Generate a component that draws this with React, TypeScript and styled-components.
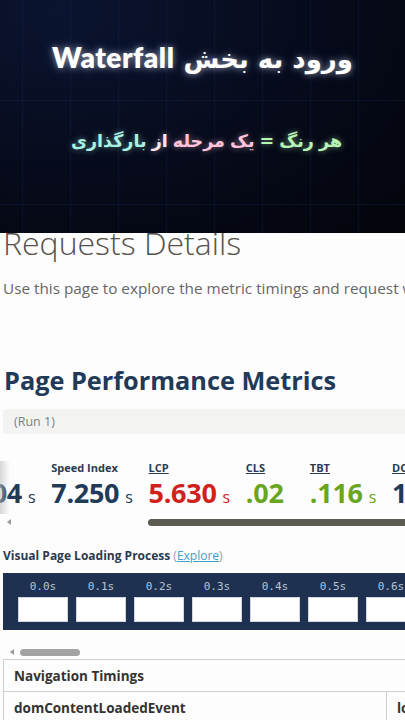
import styled, { createGlobalStyle } from 'styled-components'

const Global = createGlobalStyle`
    html, body {
        margin: 0;
        padding: 0;
        background: #fdfdfd;
    }
    body {
        font-family: "Open Sans", "Liberation Sans", sans-serif;
    }
`

const Page = styled.div`
    width: 405px;
    height: 720px;
    overflow: hidden;
    background: #fdfdfd;
`

const Banner = styled.div`
    height: 233px;
    display: flex;
    flex-direction: column;
    align-items: center;
    background-color: #050914;
    background-image:
        linear-gradient(rgba(70, 100, 220, 0.1) 1px, transparent 1px),
        linear-gradient(90deg, rgba(70, 100, 220, 0.09) 1px, transparent 1px),
        radial-gradient(ellipse at 15% 5%, #0b1430 0%, #060a1a 55%, #03050b 100%);
    background-size: 100% 104px, 48px 100%, 100% 100%;
    background-position: 0 -4px, 22px 0, 0 0;
`

const BannerTitle = styled.h1`
    margin: 40px 0 0;
    direction: rtl;
    font-family: "DejaVu Sans", "Lato", sans-serif;
    font-weight: 700;
    font-size: 26px;
    line-height: 34px;
    color: #ffffff;
    text-shadow: 0 0 6px rgba(255, 255, 255, 0.5), 0 0 14px rgba(150, 180, 255, 0.3);
    white-space: nowrap;
`

const Latin = styled.span`
    font-family: "Lato", "DejaVu Sans", sans-serif;
    font-weight: 800;
    font-size: 28px;
    letter-spacing: 0.5px;
`

const BannerSub = styled.p`
    margin: 52px 0 0 8px;
    direction: rtl;
    font-family: "DejaVu Sans", sans-serif;
    font-weight: 700;
    font-size: 17.5px;
    line-height: 26px;
    white-space: nowrap;
    word-spacing: -1px;
`

const Tint = styled.span<{ $c: string }>`
    color: ${p => p.$c};
    text-shadow: 0 0 6px ${p => p.$c}88;
`

const Content = styled.div`
    padding: 0 0 0 3px;
    overflow: hidden;
`

const Heading = styled.h2`
    margin: -8px 0 0;
    font-weight: 300;
    font-size: 32px;
    line-height: 36px;
    color: #55524c;
    white-space: nowrap;
`

const Intro = styled.p`
    margin: 17px 0 0;
    font-size: 15.3px;
    line-height: 20px;
    color: #666;
    white-space: nowrap;
`

const SectionTitle = styled.h3`
    margin: 67px 0 0 1px;
    font-weight: 700;
    font-size: 25.3px;
    line-height: 30px;
    color: #213a58;
    white-space: nowrap;
`

const RunBar = styled.div`
    margin-top: 14px;
    height: 25px;
    display: flex;
    align-items: center;
    padding-left: 11px;
    border-radius: 4px 0 0 4px;
    background: #f3f3f2;
    font-size: 12.5px;
    color: #808080;
`

const MetricsWrap = styled.div`
    position: relative;
    margin: 27px 0 0 -3px;
    overflow: hidden;
    &::before {
        content: '';
        position: absolute;
        left: 0;
        top: 0;
        bottom: 12px;
        width: 10px;
        background: linear-gradient(90deg, rgba(190, 190, 190, 0.6), rgba(255, 255, 255, 0));
        z-index: 2;
    }
`

const MetricsRow = styled.div`
    display: flex;
    gap: 16px;
    margin-left: -46px;
`

const Metric = styled.div<{ $min?: number }>`
    display: flex;
    flex-direction: column;
    flex-shrink: 0;
    min-width: ${p => p.$min || 0}px;
`

const MetricLabel = styled.span<{ $link?: boolean }>`
    font-size: 11px;
    line-height: 14px;
    font-weight: 700;
    color: #2a3a50;
    text-decoration: ${p => (p.$link ? 'underline' : 'none')};
    white-space: nowrap;
`

const MetricValue = styled.span<{ $c: string }>`
    margin-top: 1px;
    font-size: 27px;
    line-height: 34px;
    font-weight: 700;
    color: ${p => p.$c};
    white-space: nowrap;
    letter-spacing: -0.3px;
`

const Unit = styled.small`
    margin-left: 6px;
    font-size: 16px;
    font-weight: 400;
`

const ScrollTrack = styled.div<{ $mt: number }>`
    display: flex;
    align-items: center;
    height: 8px;
    margin-top: ${p => p.$mt}px;
`

const Arrow = styled.span`
    width: 0;
    height: 0;
    margin-left: 7px;
    border-top: 3.5px solid transparent;
    border-bottom: 3.5px solid transparent;
    border-right: 4px solid #9a9a9a;
`

const Thumb = styled.span<{ $left: number; $width: number; $c: string }>`
    margin-left: ${p => p.$left}px;
    width: ${p => p.$width}px;
    height: 7px;
    border-radius: 4px;
    background: ${p => p.$c};
    flex-shrink: 0;
`

const VisualTitle = styled.div`
    margin-top: 22px;
    font-size: 12px;
    line-height: 16px;
    font-weight: 700;
    color: #2b3a4e;
    white-space: nowrap;
`

const Paren = styled.span`
    font-weight: 400;
    color: #999;
`

const ExploreLink = styled.a`
    font-weight: 400;
    color: #3f9fc9;
    text-decoration: underline;
`

const Filmstrip = styled.div`
    margin-top: 9px;
    height: 57px;
    display: flex;
    gap: 8px;
    padding: 7px 0 0 15px;
    box-sizing: border-box;
    background: #1e3150;
    width: 440px;
`

const Frame = styled.div`
    display: flex;
    flex-direction: column;
    align-items: center;
    flex-shrink: 0;
`

const FrameTime = styled.span`
    font-family: "DejaVu Sans Mono", "Liberation Mono", monospace;
    font-size: 11px;
    line-height: 14px;
    color: #b9c3d2;
`

const FrameBox = styled.div`
    margin-top: 3px;
    width: 50px;
    height: 25px;
    box-sizing: border-box;
    border: 1px solid #d4d8de;
    background: #ffffff;
`

const Table = styled.div`
    margin-top: 3px;
    width: 440px;
    border: 1px solid #cfcfcf;
    border-right: none;
`

const HeaderCell = styled.div`
    height: 31px;
    display: flex;
    align-items: center;
    padding-left: 10px;
    font-size: 13.5px;
    font-weight: 700;
    color: #333;
    border-bottom: 1px solid #cfcfcf;
`

const Row = styled.div`
    display: grid;
    grid-template-columns: 382px 1fr;
    height: 32px;
`

const Cell = styled.div<{ $line?: boolean }>`
    display: flex;
    align-items: center;
    padding-left: 10px;
    font-size: 13.5px;
    font-weight: 700;
    color: #333;
    border-left: ${p => (p.$line ? '1px solid #cfcfcf' : 'none')};
    white-space: nowrap;
`

const metrics = [
    { label: 'FCP', link: true, value: '2.504', unit: 's', color: '#213a58' },
    { label: 'Speed Index', value: '7.250', unit: 's', color: '#213a58' },
    { label: 'LCP', link: true, value: '5.630', unit: 's', color: '#d0221b' },
    { label: 'CLS', link: true, value: '.02', unit: '', color: '#6aa51f', min: 48 },
    { label: 'TBT', link: true, value: '.116', unit: 's', color: '#6aa51f' },
    { label: 'DC', link: true, value: '1.620', unit: 's', color: '#213a58' },
]

const frames = ['0.0s', '0.1s', '0.2s', '0.3s', '0.4s', '0.5s', '0.6s']

const App = () => {
    return (
        <Page>
            <Global />
            <Banner>
                <BannerTitle>
                    ورود به بخش <Latin>Waterfall</Latin>
                </BannerTitle>
                <BannerSub>
                    <Tint $c="#b8f5b4">هر رنگ =</Tint> <Tint $c="#ffc4dc">یک مرحله</Tint>{' '}
                    <Tint $c="#ffe6f0">از</Tint> <Tint $c="#a8f2e4">بارگذاری</Tint>
                </BannerSub>
            </Banner>
            <Content>
                <Heading>Requests Details</Heading>
                <Intro>Use this page to explore the metric timings and request waterfall</Intro>
                <SectionTitle>Page Performance Metrics</SectionTitle>
                <RunBar>(Run 1)</RunBar>
                <MetricsWrap>
                    <MetricsRow>
                        {metrics.map(m => (
                            <Metric key={m.label} $min={m.min}>
                                <MetricLabel $link={m.link}>{m.label}</MetricLabel>
                                <MetricValue $c={m.color}>
                                    {m.value}
                                    {m.unit && <Unit>{m.unit}</Unit>}
                                </MetricValue>
                            </Metric>
                        ))}
                    </MetricsRow>
                    <ScrollTrack $mt={4}>
                        <Arrow />
                        <Thumb $left={137} $width={300} $c="#5c5b52" />
                    </ScrollTrack>
                </MetricsWrap>
                <VisualTitle>
                    Visual Page Loading Process <Paren>(</Paren>
                    <ExploreLink>Explore</ExploreLink>
                    <Paren>)</Paren>
                </VisualTitle>
                <Filmstrip>
                    {frames.map(f => (
                        <Frame key={f}>
                            <FrameTime>{f}</FrameTime>
                            <FrameBox />
                        </Frame>
                    ))}
                </Filmstrip>
                <ScrollTrack $mt={18}>
                    <Arrow />
                    <Thumb $left={6} $width={60} $c="#a3a3a3" />
                </ScrollTrack>
                <Table>
                    <HeaderCell>Navigation Timings</HeaderCell>
                    <Row>
                        <Cell>domContentLoadedEvent</Cell>
                        <Cell $line>loadEvent</Cell>
                    </Row>
                </Table>
            </Content>
        </Page>
    )
}

export default App
